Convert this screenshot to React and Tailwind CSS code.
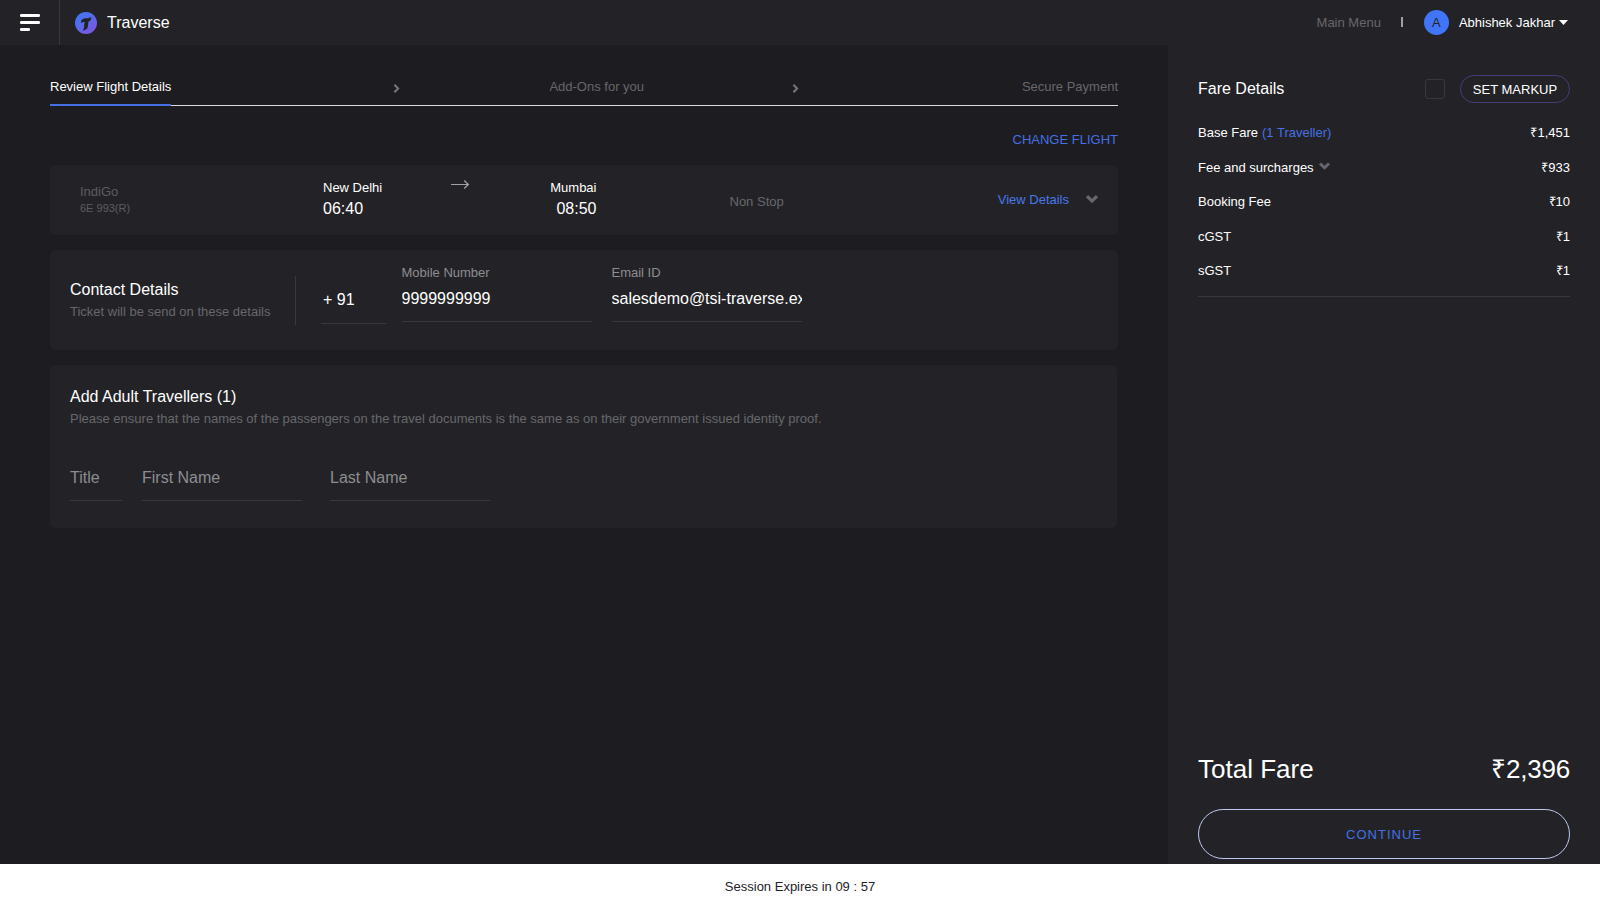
import React from "react";

const Chevron = ({ className }) => (
  <svg className={className} viewBox="0 0 12 8" fill="none" stroke="currentColor" strokeWidth="3.2">
    <path d="M1 1.2 L6 6 L11 1.2" />
  </svg>
);

const StepArrow = ({ className }) => (
  <svg className={`h-[9px] w-[7px] text-[#77777b] ${className}`} viewBox="0 0 7 9" fill="none" stroke="currentColor" strokeWidth="2">
    <path d="M1.4 0.8 L5.1 4.5 L1.4 8.2" />
  </svg>
);

const Header = () => (
  <header className="flex h-[45px] shrink-0 items-stretch bg-[#232327]">
    <button className="flex w-[59px] shrink-0 items-start pt-[14px] pl-5">
      <svg className="h-[17px] w-5" viewBox="0 0 20 17" fill="#fff">
        <rect x="0" y="0" width="20" height="3" rx="1.3" />
        <rect x="0" y="7" width="20" height="3" rx="1.3" />
        <rect x="0" y="14" width="10" height="3" rx="1.3" />
      </svg>
    </button>
    <div className="flex flex-1 items-start border-l border-[#37373c] pl-[15px]">
      <svg className="mt-3 h-[22px] w-[22px]" viewBox="0 0 22 22">
        <defs>
          <linearGradient id="brand" x1="0.1" y1="0.1" x2="0.8" y2="0.95">
            <stop offset="0" stopColor="#3d77f5" />
            <stop offset="1" stopColor="#7a58e0" />
          </linearGradient>
        </defs>
        <circle cx="11" cy="11" r="11" fill="url(#brand)" />
        <path
          d="M5.8 11 C6 8 7 6.6 9.4 6.4 C12 6.2 14.2 6.2 16.4 4.9 C16.1 7.8 15.2 9.2 13.5 9.6 C13 11.5 13.2 13.2 12.8 15 C12.2 17.4 10.3 18.4 7.6 18.6 C9.2 16.7 9.1 14.6 9.2 12.7 C9.3 11.6 9.5 10.7 9.8 10 C8.2 10 6.9 10.2 5.8 11 Z"
          fill="#232327"
        />
      </svg>
      <span className="mt-[11px] ml-[10px] text-base leading-6 text-white">Traverse</span>
    </div>
    <div className="flex items-start pr-[32px]">
      <span className="mt-[13px] leading-5 text-[#67676b]">Main Menu</span>
      <span className="mt-[17px] ml-5 h-[10px] w-[2px] bg-[#a0a0a3]" />
      <span className="mt-[10px] ml-[21px] flex h-[25px] w-[25px] items-center justify-center rounded-full bg-[#4175f9] pt-px text-[#232327]">
        A
      </span>
      <span className="mt-[13px] ml-[10px] leading-5 text-white">Abhishek Jakhar</span>
      <svg className="mt-5 ml-[4px] h-[5px] w-[9px]" viewBox="0 0 9 5" fill="#fff">
        <path d="M0 0 H9 L4.5 5 Z" />
      </svg>
    </div>
  </header>
);

const Steps = () => (
  <nav className="flex h-[29px] border-b border-[#dcdcdc]">
    <span className="-mb-px border-b-2 border-[#4470e4] leading-5 text-white">Review Flight Details</span>
    <StepArrow className="mt-[7px] ml-[222px]" />
    <span className="ml-[149px] leading-5 text-[#67676b]">Add-Ons for you</span>
    <StepArrow className="mt-[7px] ml-[148px]" />
    <span className="ml-auto leading-5 text-[#67676b]">Secure Payment</span>
  </nav>
);

const FlightCard = () => (
  <section className="mt-[15px] flex h-[70px] items-start rounded-md bg-[#232327]">
    <div className="w-[273px] pt-[17px] pl-[30px] text-[#5c5c60]">
      <div className="leading-5">IndiGo</div>
      <div className="text-[11px] leading-3">6E 993(R)</div>
    </div>
    <div className="w-[128px] pt-[13px] text-white">
      <div className="leading-5">New Delhi</div>
      <div className="text-base leading-[22px]">06:40</div>
    </div>
    <svg className="mt-[14px] h-[10px] w-[18px] text-[#a2a2a5]" viewBox="0 0 18 10" fill="none" stroke="currentColor" strokeWidth="1">
      <path d="M0 5.5 H17.5" />
      <path d="M13.2 1.5 L17.3 5.5 L13.2 9.5" strokeWidth="1.2" />
    </svg>
    <div className="w-[127.5px] pt-[13px] text-right text-white">
      <div className="leading-5">Mumbai</div>
      <div className="text-base leading-[22px]">08:50</div>
    </div>
    <div className="flex-1 pt-[27px] pl-[133px] leading-5 text-[#67676b]">Non Stop</div>
    <div className="flex items-start pt-[25px] pr-5 leading-5 text-[#4877ea]">
      View Details
      <Chevron className="mt-[5px] ml-[17px] h-[8px] w-[12px] text-[#67676b]" />
    </div>
  </section>
);

const Field = ({ label, value, className }) => (
  <div className={className}>
    <div className="leading-5 text-[#8d8d90]">{label}</div>
    <div className="h-[39px] overflow-hidden border-b border-[#39393d] pt-1 text-base leading-6 whitespace-nowrap text-white">
      {value}
    </div>
  </div>
);

const ContactCard = () => (
  <section className="mt-[15px] flex h-[100px] items-start rounded-md bg-[#232327] pl-5">
    <div className="mt-[26px] flex h-[49px] w-[226px] flex-col border-r border-[#39393d] pt-px">
      <h2 className="text-base leading-[26px] text-white">Contact Details</h2>
      <p className="leading-[18px] text-[#67676b]">Ticket will be send on these details</p>
    </div>
    <div className="mt-[38px] ml-[25px] h-9 w-[65px] border-b border-[#39393d] pl-[2px] text-base leading-6 text-white">
      + 91
    </div>
    <Field label="Mobile Number" value="9999999999" className="mt-[13px] ml-[15.5px] w-[190px]" />
    <Field label="Email ID" value="salesdemo@tsi-traverse.example" className="mt-[13px] ml-5 w-[190px]" />
  </section>
);

const TravellerCard = () => (
  <section className="mt-[15px] mr-px h-[163px] rounded-md bg-[#232327] pt-[19px] pl-5">
    <h2 className="text-base leading-[26px] text-white">Add Adult Travellers (1)</h2>
    <p className="leading-[18px] text-[#67676b]">
      Please ensure that the names of the passengers on the travel documents is the same as on their government issued
      identity proof.
    </p>
    <div className="mt-[38px] flex text-base leading-6 text-[#8d8d90]">
      <div className="h-[35px] w-[52px] border-b border-[#39393d]">Title</div>
      <div className="ml-5 h-[35px] w-[160px] border-b border-[#39393d]">First Name</div>
      <div className="ml-7 h-[35px] w-[160px] border-b border-[#39393d]">Last Name</div>
    </div>
  </section>
);

const fares = [
  { label: "Base Fare", note: "(1 Traveller)", amount: "₹1,451" },
  { label: "Fee and surcharges", expandable: true, amount: "₹933" },
  { label: "Booking Fee", amount: "₹10" },
  { label: "cGST", amount: "₹1" },
  { label: "sGST", amount: "₹1" },
];

const FarePanel = () => (
  <aside className="flex w-[432px] shrink-0 flex-col bg-[#232327] px-[30px] pt-[30px] pb-[5px] text-white">
    <div className="flex h-7 items-center">
      <h2 className="flex-1 text-base leading-6">Fare Details</h2>
      <span className="mr-[15px] h-5 w-5 rounded-[3px] border border-[#37373c]" />
      <button className="h-7 w-[110px] rounded-full border border-[#453c78] pt-px">SET MARKUP</button>
    </div>
    <div className="mt-[13px] flex h-[181px] flex-col border-b border-[#37373c]">
      {fares.map((f) => (
        <div key={f.label} className="flex h-[34.5px] justify-between leading-[34.5px]">
          <span className="flex gap-1">
            {f.label}
            {f.note && <span className="text-[#4470e4]">{f.note}</span>}
            {f.expandable && <Chevron className="mt-[11px] ml-px h-[8px] w-[11px] text-[#67676b]" />}
          </span>
          <span>{f.amount}</span>
        </div>
      ))}
    </div>
    <div className="mt-auto flex justify-between text-[26px] leading-8">
      <span>Total Fare</span>
      <span className="tracking-[-0.2px]">₹2,396</span>
    </div>
    <button className="mt-6 h-[50px] w-full rounded-full border border-[#bcc8f0] pt-[2px] tracking-[1px] text-[#4470e4]">
      CONTINUE
    </button>
  </aside>
);

export default function App() {
  return (
    <div className="flex h-[909px] w-[1600px] flex-col overflow-hidden bg-[#1d1c20] font-['Liberation_Sans',Arial,sans-serif] text-[13px]">
      <Header />
      <div className="flex min-h-0 flex-1">
        <main className="flex-1 px-[50px] pt-8">
          <Steps />
          <div className="mt-[24px] text-right leading-5 text-[#4470e4]">CHANGE FLIGHT</div>
          <FlightCard />
          <ContactCard />
          <TravellerCard />
        </main>
        <FarePanel />
      </div>
      <footer className="flex h-[45px] shrink-0 items-center justify-center bg-white text-[#232327]">
        Session Expires in 09 : 57
      </footer>
    </div>
  );
}
